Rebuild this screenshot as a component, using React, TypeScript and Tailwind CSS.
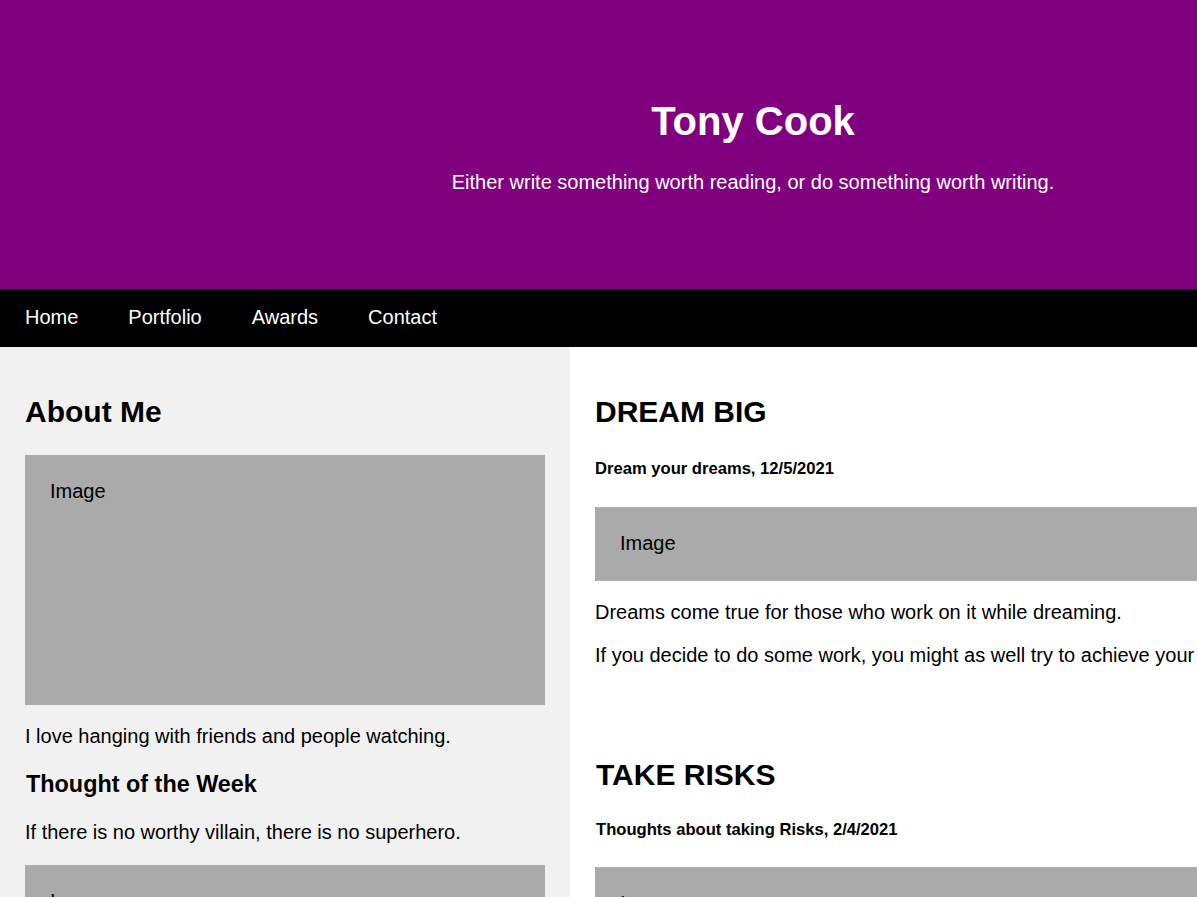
export default function App() {
    // JSX
    return (
        <div className="w-[1197px] h-[897px] overflow-hidden bg-white text-black font-['Liberation_Sans',Arial,sans-serif]">
            <div className="w-[1506px]">
                {/* HEADER */}
                <header className="h-[289px] bg-[#800080] text-white flex flex-col items-center">
                    <h1 className="mt-[98px] text-[40px] leading-[46px] font-bold">Tony Cook</h1>
                    <p className="mt-[27px] text-[20px] leading-[23px]">
                        Either write something worth reading, or do something worth writing.
                    </p>
                </header>

                {/* NAV */}
                <nav className="h-[58px] bg-black flex items-center pb-px">
                    {['Home', 'Portfolio', 'Awards', 'Contact'].map((link) => (
                        <a key={link} href="#" className="px-[25px] text-white text-[20px] leading-[23px]">
                            {link}
                        </a>
                    ))}
                </nav>

                {/* ROW */}
                <div className="flex">
                    {/* LEFT */}
                    <div className="w-[570px] shrink-0 bg-[#f1f1f1] px-[25px] pt-[48px] pb-10">
                        <h2 className="text-[30px] leading-[34px] font-bold">About Me</h2>
                        <div className="mt-[26px] h-[250px] bg-[#aaaaaa] px-[25px] pt-[25px] text-[20px] leading-[23px]">
                            Image
                        </div>
                        <p className="mt-[20px] text-[20px] leading-[23px]">
                            I love hanging with friends and people watching.
                        </p>
                        <h3 className="mt-[23px] pl-px text-[23.4px] leading-[27px] font-bold">Thought of the Week</h3>
                        <p className="mt-[23px] text-[20px] leading-[23px]">
                            If there is no worthy villain, there is no superhero.
                        </p>
                        <div className="mt-[21px] h-[250px] bg-[#aaaaaa] px-[25px] pt-[25px] text-[20px] leading-[23px]">
                            Image
                        </div>
                    </div>

                    {/* RIGHT */}
                    <div className="flex-1 px-[25px] pt-[48px]">
                        <BlogCard
                            title="DREAM BIG"
                            meta="Dream your dreams, 12/5/2021"
                            paragraphs={[
                                'Dreams come true for those who work on it while dreaming.',
                                'If you decide to do some work, you might as well try to achieve your dreams while you are at it.',
                            ]}
                        />
                        <div className="mt-[91px]">
                            <BlogCard
                                title="TAKE RISKS"
                                meta="Thoughts about taking Risks, 2/4/2021"
                                paragraphs={['Only those who risk going too far can possibly find out how far one can go.']}
                                shifted
                            />
                        </div>
                    </div>
                </div>
            </div>
        </div>
    )
}

interface BlogCardProps {
    title: string
    meta: string
    paragraphs: string[]
    shifted?: boolean
}

function BlogCard({ title, meta, paragraphs, shifted }: BlogCardProps) {
    return (
        <div>
            <h2 className={`text-[30px] leading-[34px] font-bold ${shifted ? 'pl-px' : ''}`}>{title}</h2>
            <h5 className={`text-[16.6px] leading-[19px] font-bold ${shifted ? 'pl-px mt-[28px]' : 'mt-[30px]'}`}>{meta}</h5>
            <div className={`h-[74px] bg-[#aaaaaa] px-[25px] pt-[25px] text-[20px] leading-[23px] ${shifted ? 'mt-[28px]' : 'mt-[29px]'}`}>
                Image
            </div>
            {paragraphs.map((text) => (
                <p key={text} className="mt-[20px] text-[20px] leading-[23px] whitespace-nowrap">
                    {text}
                </p>
            ))}
        </div>
    )
}
